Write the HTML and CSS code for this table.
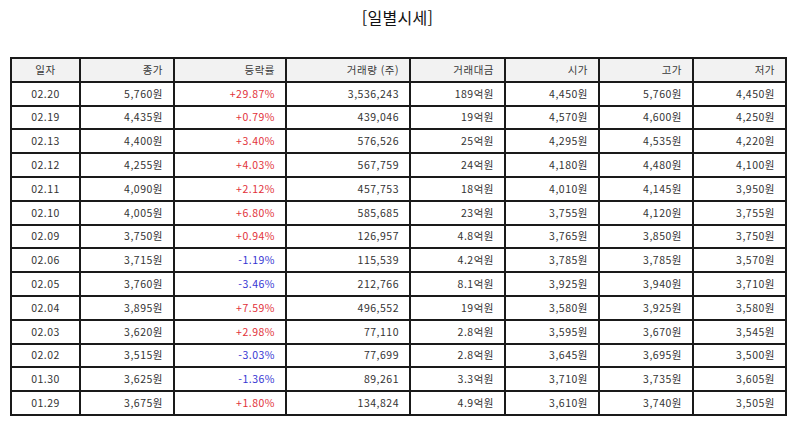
FILE: index.html
```html
<!DOCTYPE html>
<html lang="ko">
<head>
<meta charset="utf-8">
<title>일별시세</title>
<link rel="stylesheet" href="styles.css">
</head>
<body>
<div class="page">
  <h1 class="title">[일별시세]</h1>
  <table class="prices">
    <colgroup>
      <col class="c-date"><col class="c-close"><col class="c-rate"><col class="c-vol"><col class="c-amt"><col class="c-open"><col class="c-high"><col class="c-low">
    </colgroup>
    <thead>
      <tr><th class="center">일자</th><th>종가</th><th>등락률</th><th>거래량 (주)</th><th>거래대금</th><th>시가</th><th>고가</th><th>저가</th></tr>
    </thead>
    <tbody>
      <tr><td class="center">02.20</td><td>5,760원</td><td class="up">+29.87%</td><td>3,536,243</td><td>189억원</td><td>4,450원</td><td>5,760원</td><td>4,450원</td></tr>
      <tr><td class="center">02.19</td><td>4,435원</td><td class="up">+0.79%</td><td>439,046</td><td>19억원</td><td>4,570원</td><td>4,600원</td><td>4,250원</td></tr>
      <tr><td class="center">02.13</td><td>4,400원</td><td class="up">+3.40%</td><td>576,526</td><td>25억원</td><td>4,295원</td><td>4,535원</td><td>4,220원</td></tr>
      <tr><td class="center">02.12</td><td>4,255원</td><td class="up">+4.03%</td><td>567,759</td><td>24억원</td><td>4,180원</td><td>4,480원</td><td>4,100원</td></tr>
      <tr><td class="center">02.11</td><td>4,090원</td><td class="up">+2.12%</td><td>457,753</td><td>18억원</td><td>4,010원</td><td>4,145원</td><td>3,950원</td></tr>
      <tr><td class="center">02.10</td><td>4,005원</td><td class="up">+6.80%</td><td>585,685</td><td>23억원</td><td>3,755원</td><td>4,120원</td><td>3,755원</td></tr>
      <tr><td class="center">02.09</td><td>3,750원</td><td class="up">+0.94%</td><td>126,957</td><td>4.8억원</td><td>3,765원</td><td>3,850원</td><td>3,750원</td></tr>
      <tr><td class="center">02.06</td><td>3,715원</td><td class="down">-1.19%</td><td>115,539</td><td>4.2억원</td><td>3,785원</td><td>3,785원</td><td>3,570원</td></tr>
      <tr><td class="center">02.05</td><td>3,760원</td><td class="down">-3.46%</td><td>212,766</td><td>8.1억원</td><td>3,925원</td><td>3,940원</td><td>3,710원</td></tr>
      <tr><td class="center">02.04</td><td>3,895원</td><td class="up">+7.59%</td><td>496,552</td><td>19억원</td><td>3,580원</td><td>3,925원</td><td>3,580원</td></tr>
      <tr><td class="center">02.03</td><td>3,620원</td><td class="up">+2.98%</td><td>77,110</td><td>2.8억원</td><td>3,595원</td><td>3,670원</td><td>3,545원</td></tr>
      <tr><td class="center">02.02</td><td>3,515원</td><td class="down">-3.03%</td><td>77,699</td><td>2.8억원</td><td>3,645원</td><td>3,695원</td><td>3,500원</td></tr>
      <tr><td class="center">01.30</td><td>3,625원</td><td class="down">-1.36%</td><td>89,261</td><td>3.3억원</td><td>3,710원</td><td>3,735원</td><td>3,605원</td></tr>
      <tr><td class="center">01.29</td><td>3,675원</td><td class="up">+1.80%</td><td>134,824</td><td>4.9억원</td><td>3,610원</td><td>3,740원</td><td>3,505원</td></tr>
    </tbody>
  </table>
</div>
</body>
</html>
```

FILE: styles.css
```css
html, body {
  margin: 0;
  padding: 0;
  background: #ffffff;
}
body {
  font-family: "Noto Sans CJK KR", "Noto Sans", sans-serif;
  color: #333333;
}
.page {
  padding: 0 9px 0 10px;
}
.title {
  margin: 0;
  padding-top: 6px;
  height: 57px;
  box-sizing: border-box;
  text-align: center;
  font-size: 16px;
  font-weight: 400;
  line-height: 22px;
  color: #111111;
  letter-spacing: 0.3px;
}
.prices {
  width: 775px;
  border-collapse: collapse;
  table-layout: fixed;
  font-size: 10.5px;
  letter-spacing: 0.5px;
  border: 2px solid #1a1a1a;
}
.c-date { width: 69px; }
.c-close { width: 94px; }
.c-rate { width: 112px; }
.c-vol { width: 124px; }
.c-amt { width: 95px; }
.c-open { width: 94px; }
.c-high { width: 94px; }
.c-low { width: 93px; }
.prices th,
.prices td {
  border: 2px solid #1a1a1a;
  height: 23.8px;
  padding: 0 10px 0 4px;
  text-align: right;
  font-weight: 400;
  white-space: nowrap;
  box-sizing: border-box;
  line-height: 14px;
}
.prices th {
  background: #f2f2f2;
  color: #3a3a3a;
}
.prices .center {
  text-align: center;
  padding: 0;
}
.up { color: #e2323a; }
.down { color: #3535d2; }
```
